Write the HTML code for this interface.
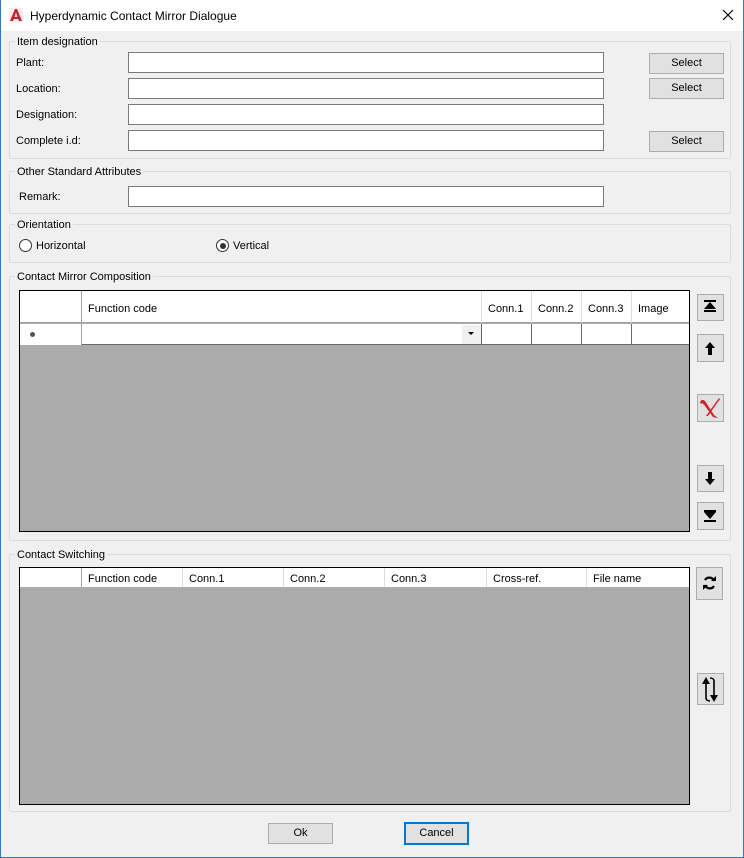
<!DOCTYPE html>
<html><head><style>
*{box-sizing:border-box;margin:0;padding:0}
body{width:744px;height:858px;background:#f0f0f0;font-family:"Liberation Sans",sans-serif;font-size:11px;line-height:1.35;color:#000;position:relative;overflow:hidden}
.a{position:absolute}
.win{left:0;top:0;width:744px;height:858px;border:1px solid #3c74c4;border-top:none}
.title{left:1px;top:0;width:742px;height:31px;background:#fff}
.grp{border:1px solid #dcdcdc;border-radius:2px}
.lg{background:#f0f0f0;padding:0 2px;white-space:nowrap}
.in{background:#fff;border:1px solid #7a7a7a}
.btn{background:#e1e1e1;border:1px solid #adadad;text-align:center}
.grid{background:#ababab;border:1px solid #000}
.ib{background:#e1e1e1;border:1px solid #adadad}
</style></head><body>
<div class="a win"></div>
<div class="a title"></div>
<svg class="a" style="left:9px;top:8px" width="14" height="14" viewBox="0 0 14 14"><rect width="14" height="14" fill="#fbeaea"/><path d="M1 13 L6 1 L8 1 L13 13 L10 13 L7 4.5 L4 13Z M5 9 L9 9 L9.5 11 L4.5 11Z" fill="#c8202a"/></svg>
<div class="a" style="left:30px;top:8px;font-size:12px">Hyperdynamic Contact Mirror Dialogue</div>
<svg class="a" style="left:722px;top:9px" width="12" height="12"><path d="M1 1L11 11M11 1L1 11" stroke="#000" stroke-width="1.2"/></svg>

<div class="a grp" style="left:9px;top:41px;width:722px;height:118px"></div>
<div class="a lg" style="left:15px;top:35px">Item designation</div>
<div class="a" style="left:16px;top:56px">Plant:</div>
<div class="a" style="left:16px;top:82px">Location:</div>
<div class="a" style="left:16px;top:108px">Designation:</div>
<div class="a" style="left:16px;top:134px">Complete i.d:</div>
<div class="a in" style="left:128px;top:52px;width:476px;height:21px"></div>
<div class="a in" style="left:128px;top:78px;width:476px;height:21px"></div>
<div class="a in" style="left:128px;top:104px;width:476px;height:21px"></div>
<div class="a in" style="left:128px;top:130px;width:476px;height:21px"></div>
<div class="a btn" style="left:649px;top:53px;width:75px;height:21px;line-height:19px">Select</div>
<div class="a btn" style="left:649px;top:78px;width:75px;height:21px;line-height:19px">Select</div>
<div class="a btn" style="left:649px;top:131px;width:75px;height:21px;line-height:19px">Select</div>

<div class="a grp" style="left:9px;top:171px;width:722px;height:43px"></div>
<div class="a lg" style="left:15px;top:165px">Other Standard Attributes</div>
<div class="a" style="left:19px;top:190px">Remark:</div>
<div class="a in" style="left:128px;top:186px;width:476px;height:21px"></div>

<div class="a grp" style="left:9px;top:224px;width:722px;height:39px"></div>
<div class="a lg" style="left:15px;top:218px">Orientation</div>
<div class="a" style="left:19px;top:239px;width:13px;height:13px;border:1px solid #333;border-radius:50%;background:#fff"></div>
<div class="a" style="left:36px;top:239px">Horizontal</div>
<div class="a" style="left:216px;top:239px;width:13px;height:13px;border:1px solid #333;border-radius:50%;background:#fff"></div>
<div class="a" style="left:219.5px;top:242.5px;width:6px;height:6px;border-radius:50%;background:#333"></div>
<div class="a" style="left:233px;top:239px">Vertical</div>

<div class="a grp" style="left:9px;top:276px;width:722px;height:265px"></div>
<div class="a lg" style="left:15px;top:270px">Contact Mirror Composition</div>
<div class="a grid" style="left:19px;top:290px;width:671px;height:242px"></div>
<div class="a" style="left:20px;top:291px;width:669px;height:32px;background:#fff;border-bottom:1px solid #a0a0a0"></div>
<div class="a" style="left:81px;top:291px;width:1px;height:54px;background:#a0a0a0"></div>
<div class="a" style="left:88px;top:302px">Function code</div>
<div class="a" style="left:481px;top:291px;width:1px;height:32px;background:#dcdcdc"></div>
<div class="a" style="left:531px;top:291px;width:1px;height:32px;background:#dcdcdc"></div>
<div class="a" style="left:581px;top:291px;width:1px;height:32px;background:#dcdcdc"></div>
<div class="a" style="left:631px;top:291px;width:1px;height:32px;background:#dcdcdc"></div>
<div class="a" style="left:488px;top:302px">Conn.1</div>
<div class="a" style="left:538px;top:302px">Conn.2</div>
<div class="a" style="left:588px;top:302px">Conn.3</div>
<div class="a" style="left:638px;top:302px">Image</div>
<div class="a" style="left:20px;top:324px;width:61px;height:21px;background:#fff"></div>
<div class="a" style="left:30px;top:332px;width:5px;height:5px;border-radius:50%;background:#555"></div>
<div class="a" style="left:82px;top:324px;width:607px;height:21px;background:#fff;border-bottom:1px solid #696969"></div>
<div class="a" style="left:462px;top:325px;width:19px;height:19px;background:#f0f0f0"></div>
<svg class="a" style="left:468px;top:332px" width="6" height="4"><path d="M0 0H6L3 3Z" fill="#000"/></svg>
<div class="a" style="left:481px;top:324px;width:1px;height:21px;background:#696969"></div>
<div class="a" style="left:531px;top:324px;width:1px;height:21px;background:#696969"></div>
<div class="a" style="left:581px;top:324px;width:1px;height:21px;background:#696969"></div>
<div class="a" style="left:631px;top:324px;width:1px;height:21px;background:#696969"></div>

<div class="a ib" style="left:697px;top:294px;width:27px;height:27px"></div>
<svg class="a" style="left:704px;top:300px" width="12" height="14"><rect x="0" y="0" width="12" height="2"/><path d="M6 2L12 9H0Z M0 10H12V12H0Z"/></svg>
<div class="a ib" style="left:697px;top:334px;width:27px;height:28px"></div>
<svg class="a" style="left:705px;top:342px" width="10" height="13"><path d="M5 0L10 6H7V13H3V6H0Z"/></svg>
<div class="a ib" style="left:697px;top:394px;width:27px;height:28px"></div>
<svg class="a" style="left:699px;top:396px" width="23" height="24"><path d="M1 6C3 2 6 4 8 8L15 19L19 22L14 21L6 10C4 7 3 7 2 8Z" fill="#d2232a"/><path d="M21 3L9 20L7 20L20 2Z" fill="#d2232a"/></svg>
<div class="a ib" style="left:697px;top:465px;width:27px;height:27px"></div>
<svg class="a" style="left:705px;top:472px" width="10" height="13"><path d="M3 0H7V7H10L5 13L0 7H3Z"/></svg>
<div class="a ib" style="left:697px;top:502px;width:27px;height:28px"></div>
<svg class="a" style="left:704px;top:510px" width="12" height="13"><path d="M0 0H12V2H0Z M0 2H12L6 9Z M0 10H12V12H0Z"/></svg>

<div class="a grp" style="left:9px;top:554px;width:722px;height:258px"></div>
<div class="a lg" style="left:15px;top:548px">Contact Switching</div>
<div class="a grid" style="left:19px;top:567px;width:671px;height:238px"></div>
<div class="a" style="left:20px;top:568px;width:669px;height:19px;background:#fff"></div>
<div class="a" style="left:81px;top:568px;width:1px;height:19px;background:#a0a0a0"></div>
<div class="a" style="left:182px;top:568px;width:1px;height:19px;background:#dcdcdc"></div>
<div class="a" style="left:283px;top:568px;width:1px;height:19px;background:#dcdcdc"></div>
<div class="a" style="left:384px;top:568px;width:1px;height:19px;background:#dcdcdc"></div>
<div class="a" style="left:486px;top:568px;width:1px;height:19px;background:#dcdcdc"></div>
<div class="a" style="left:586px;top:568px;width:1px;height:19px;background:#dcdcdc"></div>
<div class="a" style="left:88px;top:572px">Function code</div>
<div class="a" style="left:189px;top:572px">Conn.1</div>
<div class="a" style="left:290px;top:572px">Conn.2</div>
<div class="a" style="left:391px;top:572px">Conn.3</div>
<div class="a" style="left:493px;top:572px">Cross-ref.</div>
<div class="a" style="left:593px;top:572px">File name</div>

<div class="a ib" style="left:696px;top:567px;width:27px;height:33px"></div>
<svg class="a" style="left:703px;top:576px" width="13" height="14"><path d="M11 5A5 5 0 0 0 2 4" stroke="#000" stroke-width="2.2" fill="none"/><path d="M8 5H13V0Z"/><path d="M2 9A5 5 0 0 0 11 10" stroke="#000" stroke-width="2.2" fill="none"/><path d="M5 9H0V14Z"/></svg>
<div class="a ib" style="left:697px;top:673px;width:27px;height:32px"></div>
<svg class="a" style="left:701px;top:676px" width="19" height="27"><path d="M5 8V22C5 24 7 25 9 25" stroke="#000" stroke-width="1.6" fill="none"/><path d="M5 1L1 8H9Z"/><path d="M13 19V5C13 3 11 2 9 2" stroke="#000" stroke-width="1.6" fill="none"/><path d="M13 26L9 19H17Z"/></svg>

<div class="a btn" style="left:268px;top:823px;width:65px;height:21px;line-height:19px;border-color:#adadad">Ok</div>
<div class="a btn" style="left:404px;top:822px;width:65px;height:23px;line-height:19px;border:2px solid #0078d7">Cancel</div>
</body></html>
